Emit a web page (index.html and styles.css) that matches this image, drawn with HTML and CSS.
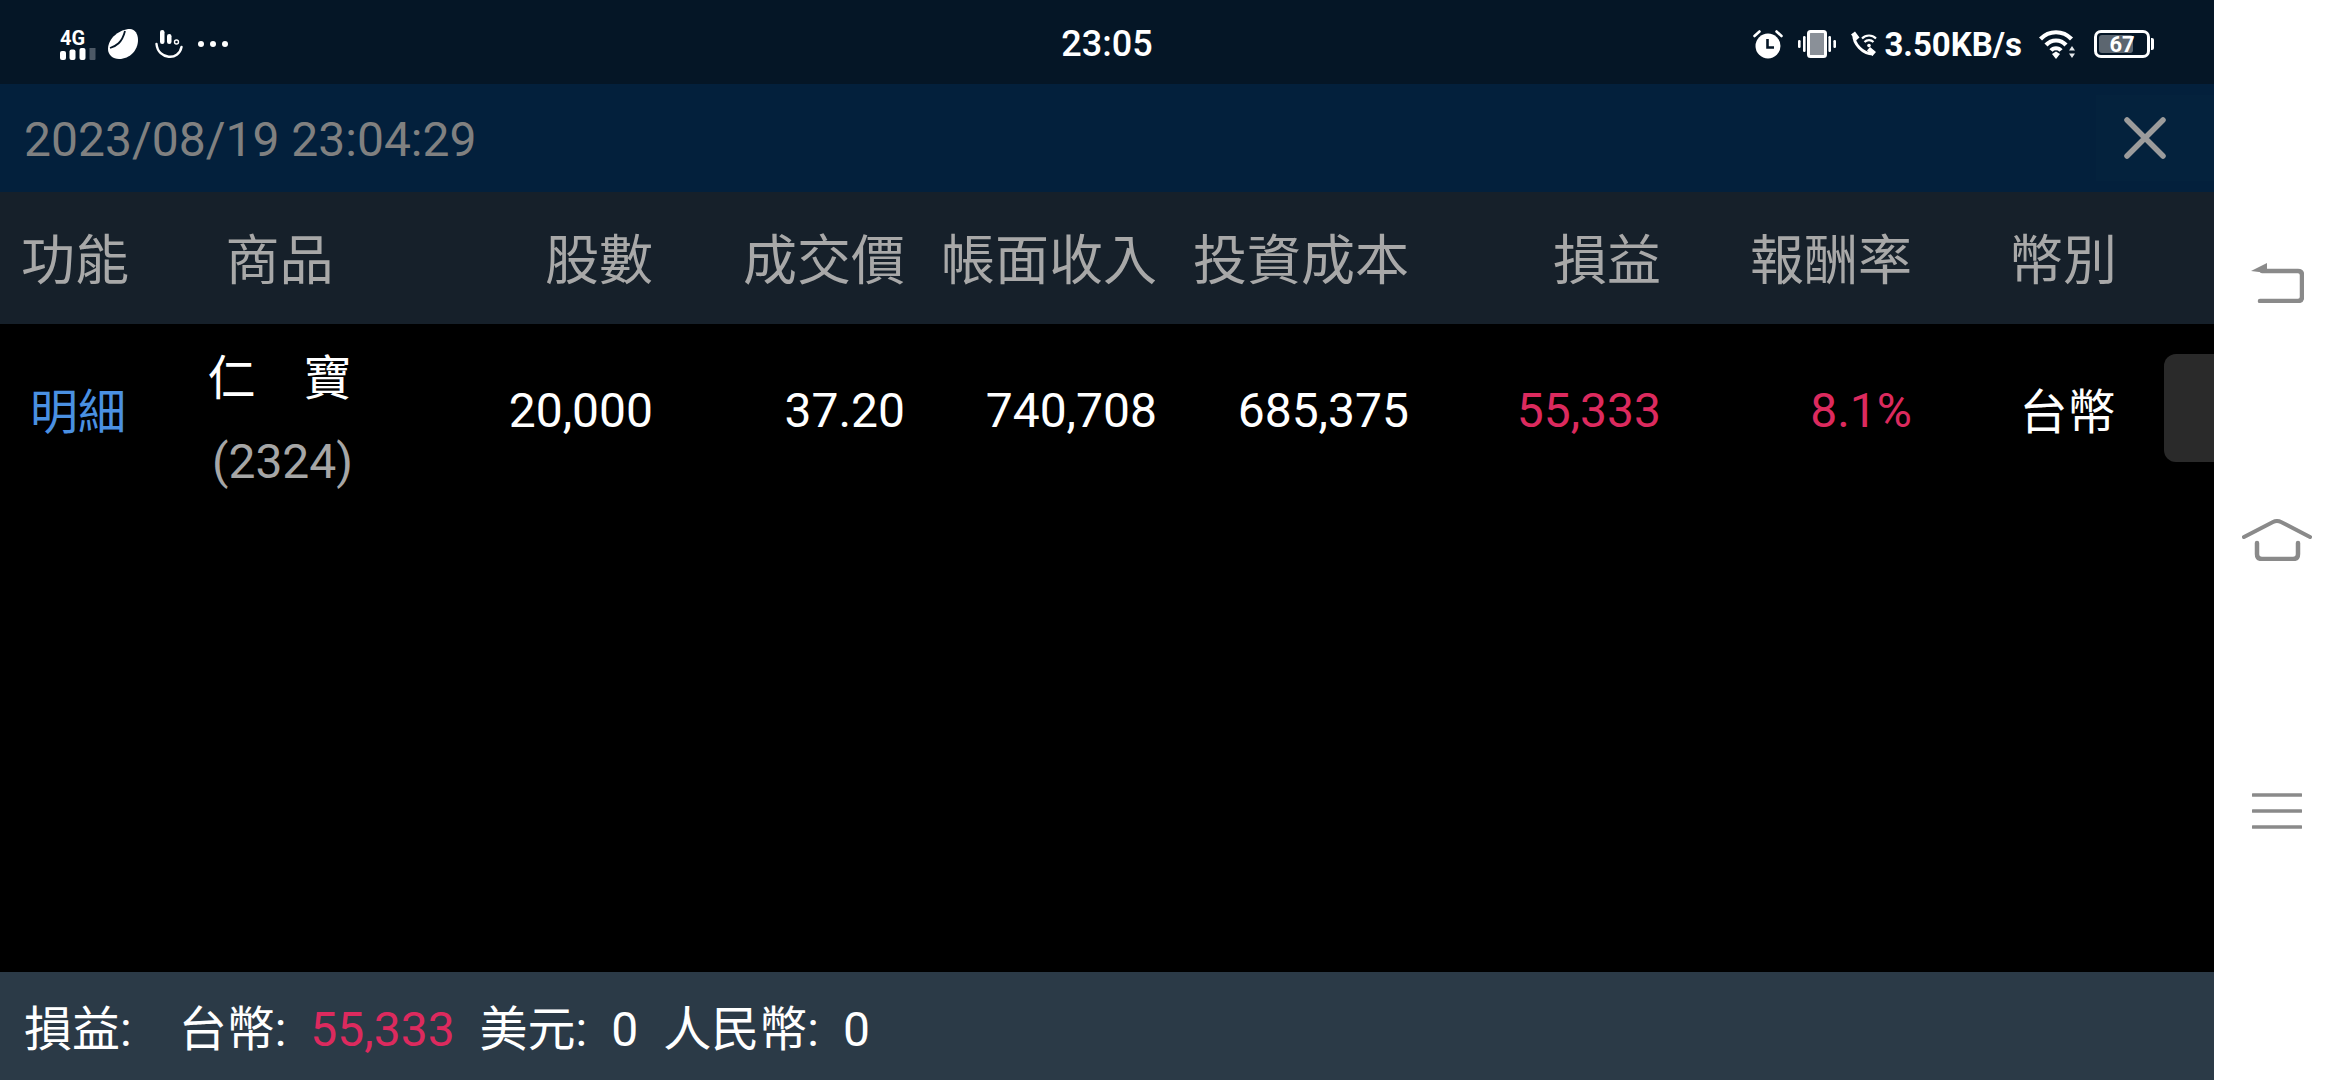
FILE: index.html
```html
<!DOCTYPE html>
<html>
<head>
  <meta charset="utf-8">
  <title>損益明細</title>
  <link rel="stylesheet" href="styles.css">
</head>
<body>
  <div class="screen">
    <div class="status-bar">
      <div class="status-left">
        <div class="net">
          <span class="net-label">4G</span>
          <svg width="36" height="12" viewBox="0 0 36 12">
            <rect x="0" y="3" width="6" height="9" rx="2" fill="#fff"/>
            <rect x="9.5" y="1.500" width="6" height="10.500" rx="2" fill="#fff"/>
            <rect x="19.500" y="0" width="6" height="12" rx="2" fill="#fff"/>
            <rect x="29.500" y="-4" width="6" height="16" rx="1" fill="#4d5966"/>
          </svg>
        </div>
        <svg class="leaf" width="30" height="30" viewBox="0 0 30 30">
          <path d="M22 0C27 0 30 5 30 11C30 21 22 30 11 30C5 30 0 26 0 20C0 9 12 0 22 0Z" fill="#fff"/>
          <path d="M2 19C8 17 14 14 17 2" fill="none" stroke="#051626" stroke-width="1.800"/>
        </svg>
        <svg class="pal" width="28" height="28" viewBox="0 0 28 28">
          <rect x="5" y="0" width="4.500" height="14" rx="2.200" fill="#fff"/>
          <rect x="12" y="4" width="4.500" height="10" rx="2.200" fill="#fff"/>
          <circle cx="21.500" cy="12" r="2" fill="none" stroke="#fff" stroke-width="1.400"/>
          <path d="M1.500 14C3 30 24 31 26.500 17" fill="none" stroke="#fff" stroke-width="2.400" stroke-linecap="round"/>
        </svg>
        <svg class="dots" width="30" height="6" viewBox="0 0 30 6">
          <circle cx="3" cy="3" r="3" fill="#fff"/>
          <circle cx="15" cy="3" r="3" fill="#fff"/>
          <circle cx="27" cy="3" r="3" fill="#fff"/>
        </svg>
      </div>
      <div class="clock">23:05</div>
      <div class="status-right">
        <svg class="alarm" width="30" height="30" viewBox="0 0 30 30">
          <circle cx="15" cy="17" r="12.500" fill="#fff"/>
          <path d="M1.500 7L6.500 2.500M28.500 7L23.500 2.500" stroke="#fff" stroke-width="2.600" stroke-linecap="round"/>
          <path d="M14.500 10V18.500H21" fill="none" stroke="#051626" stroke-width="2.600"/>
        </svg>
        <svg class="vibrate" width="38" height="28" viewBox="0 0 38 28">
          <rect x="10.500" y="1.500" width="17" height="25" rx="2" fill="#8a9098" stroke="#fff" stroke-width="3"/>
          <rect x="5" y="6" width="2.600" height="16" rx="1.200" fill="#fff"/>
          <rect x="0" y="10" width="2.600" height="8" rx="1.200" fill="#fff"/>
          <rect x="30.400" y="6" width="2.600" height="16" rx="1.200" fill="#fff"/>
          <rect x="35.400" y="10" width="2.600" height="8" rx="1.200" fill="#fff"/>
        </svg>
        <svg class="call" width="27" height="26" viewBox="0 0 27 26">
          <path d="M4 3C3 13 13 23 23 23" fill="none" stroke="#fff" stroke-width="3"/>
          <path d="M1 3.500L5 0.500L9.500 6.500L6 9.500Z M17 19.500L20 16L26 21L22.500 25Z" fill="#fff"/>
          <path d="M12 7.500C16 3.500 22 3.500 26 7.500M14.500 11C17 8.500 21 8.500 23.500 11" fill="none" stroke="#fff" stroke-width="2.200"/>
          <circle cx="19" cy="14.500" r="1.800" fill="#fff"/>
        </svg>
        <span class="speed">3.50KB/s</span>
        <svg class="wifi" width="38" height="30" viewBox="0 0 38 30">
          <path d="M1.500 10C10 1 24 1 32.500 10M7 16C12.500 10 21.500 10 27 16M12 21.500C14.500 18.500 19.500 18.500 22 21.500" fill="none" stroke="#fff" stroke-width="4.200"/>
          <path d="M13 25L17 22.500L21 25L17 30Z" fill="#fff"/>
          <path d="M33 17L36 21.500H30ZM33 29L36 24.500H30Z" fill="#e4e7ea"/>
        </svg>
        <div class="battery">
          <div class="battery-body">
            <div class="battery-level"></div>
            <span class="battery-text">67</span>
          </div>
          <div class="battery-cap"></div>
        </div>
      </div>
    </div>

    <div class="title-bar">
      <div class="update-time">2023/08/19 23:04:29</div>
      <div class="close-btn">
        <svg width="42" height="42" viewBox="0 0 42 42">
          <path d="M3 3L39 39M39 3L3 39" stroke="#9c9c9c" stroke-width="5.500" stroke-linecap="round"/>
        </svg>
      </div>
    </div>

    <div class="table-head grid-cols">
      <div class="center">功能</div>
      <div class="center">商品</div>
      <div class="right">股數</div>
      <div class="right">成交價</div>
      <div class="right">帳面收入</div>
      <div class="right">投資成本</div>
      <div class="right">損益</div>
      <div class="right">報酬率</div>
      <div class="center">幣別</div>
    </div>

    <div class="table-body">
      <div class="table-row grid-cols">
        <div class="center detail-link">明細</div>
        <div class="center product">
          <div class="product-name">仁　寶</div>
          <div class="product-code">(2324)</div>
        </div>
        <div class="right">20,000</div>
        <div class="right">37.20</div>
        <div class="right">740,708</div>
        <div class="right">685,375</div>
        <div class="right profit">55,333</div>
        <div class="right profit">8.1%</div>
        <div class="center currency">台幣</div>
      </div>
      <div class="scroll-handle"></div>
    </div>

    <div class="summary">
      <span class="summary-title">損益:</span>
      <span class="summary-item"><span>台幣:</span><span class="profit">55,333</span></span>
      <span class="summary-item"><span>美元:</span><span>0</span></span>
      <span class="summary-item"><span>人民幣:</span><span>0</span></span>
    </div>
  </div>

  <div class="nav-bar">
    <svg class="nav-back" width="54" height="42" viewBox="0 0 54 42">
      <path d="M12 10H48Q52 10 52 14V36Q52 40 48 40H10" fill="none" stroke="#8a8a8a" stroke-width="4.500" stroke-linecap="round"/>
      <path d="M1 10L17 2V12Z" fill="#8a8a8a"/>
    </svg>
    <svg class="nav-home" width="70" height="42" viewBox="0 0 70 42">
      <path d="M2 18L31 3Q35 1 39 3L68 18" fill="none" stroke="#8a8a8a" stroke-width="4" stroke-linecap="round"/>
      <path d="M15 24V35Q15 40 20 40H51Q56 40 56 35V24" fill="none" stroke="#8a8a8a" stroke-width="4.500" stroke-linecap="round"/>
    </svg>
    <svg class="nav-menu" width="50" height="36" viewBox="0 0 50 36">
      <path d="M1 2H49M1 18H49M1 34H49" stroke="#8a8a8a" stroke-width="3.500" stroke-linecap="round"/>
    </svg>
  </div>
</body>
</html>
```

FILE: styles.css
```css
* { box-sizing: border-box; }
html, body { margin: 0; padding: 0; }
body { width: 2340px; height: 1080px; overflow: hidden; display: flex; background: #fff; font-family: Roboto, "Noto Sans CJK TC", sans-serif; font-size: 48px; color: #fff; }

.screen { width: 2214px; height: 1080px; display: flex; flex-direction: column; background: #000; }

.status-bar { height: 84px; flex: none; display: grid; grid-template-columns: 1fr auto 1fr; align-items: center; padding: 4px 60px 0; background: #051626; }
.status-left, .status-right { display: flex; align-items: center; }
.status-right { justify-content: flex-end; }
.clock { font-size: 36px; font-weight: 500; }

.net { display: flex; flex-direction: column; width: 36px; }
.net-label { font-size: 20px; font-weight: 700; line-height: 19px; }
.leaf { margin-left: 12px; }
.pal { margin-left: 17px; }
.dots { margin-left: 15px; }

.alarm { margin-right: 15px; }
.vibrate { margin-right: 14px; }
.call { margin-right: 7px; }
.speed { font-size: 33px; font-weight: 700; margin-right: 17px; }
.wifi { margin-right: 17px; }

.battery { display: flex; align-items: center; }
.battery-body { position: relative; width: 56px; height: 28px; border: 3px solid #fff; border-radius: 7px; overflow: hidden; display: flex; align-items: center; justify-content: center; }
.battery-level { position: absolute; left: 2px; top: 2px; bottom: 2px; width: 67%; background: #5c6670; border-radius: 3px; }
.battery-text { position: relative; font-size: 22px; font-weight: 700; }
.battery-cap { width: 3px; height: 12px; margin-left: 1px; background: #fff; border-radius: 0 2px 2px 0; }

.title-bar { height: 108px; flex: none; display: flex; align-items: center; justify-content: space-between; padding-left: 24px; background: #03203c; }
.update-time { color: #808080; padding-top: 3px; }
.close-btn { width: 118px; height: 86px; display: flex; align-items: center; padding-left: 28px; background: #04223d; }

.grid-cols { display: grid; grid-template-columns: 150px 259px 244px 252px 252px 252px 252px 251px 302px; }
.center { text-align: center; }
.right { text-align: right; }

.table-head { height: 132px; flex: none; align-items: center; padding-bottom: 4px; background: #16202a; color: #a8a8a8; font-size: 54px; }

.table-body { flex: 1; position: relative; background: #000; }
.table-row { grid-template-rows: 172px; align-items: center; }
.detail-link { color: #4a90e2; padding: 0 0 4px 6px; }
.currency { padding: 0 0 4px 9px; }
.product { padding-top: 19px; }
.product-name { line-height: 84px; }
.product-code { color: #a6a6a6; line-height: 81px; padding-left: 6px; }
.profit { color: #dc2a5e; }
.scroll-handle { position: absolute; right: 0; top: 30px; width: 50px; height: 108px; background: #2a2a2a; border-radius: 12px 0 0 12px; }

.summary { height: 108px; flex: none; display: flex; align-items: center; gap: 25px; padding: 0 0 2px 24px; background: #2b3a47; }
.summary-title { margin-right: 22px; }
.summary-item { display: flex; align-items: baseline; gap: 24px; }

.nav-bar { width: 126px; height: 1080px; display: flex; flex-direction: column; align-items: center; padding-top: 261px; background: #fff; }
.nav-home { margin-top: 216px; }
.nav-menu { margin-top: 232px; }
```
